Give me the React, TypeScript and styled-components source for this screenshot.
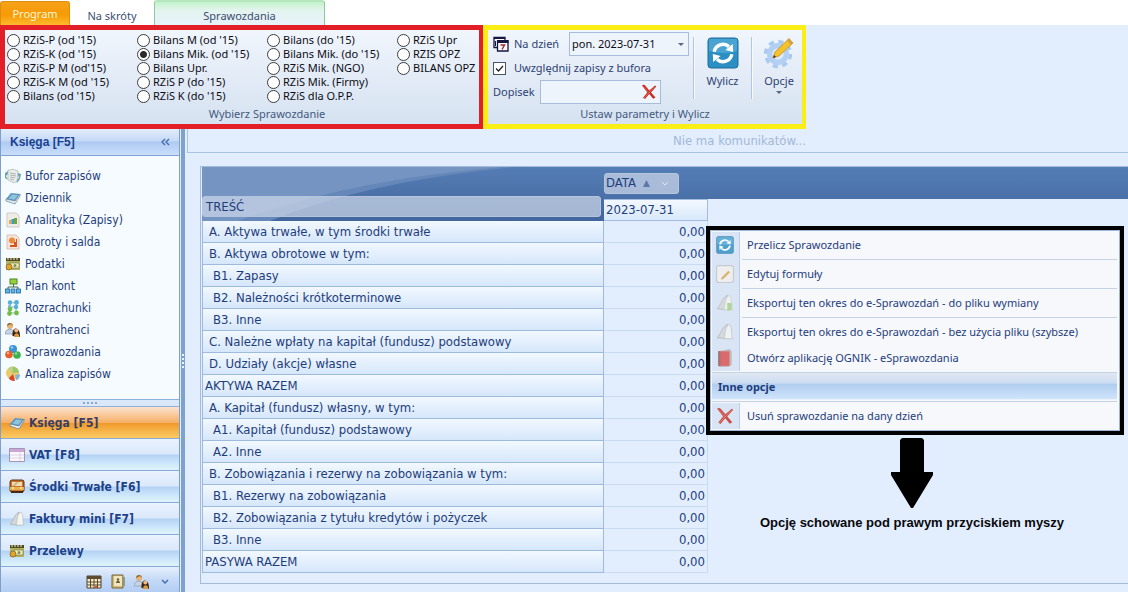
import React from "react";
import styled, { createGlobalStyle } from "styled-components";

const ribbonFont = `"Noto Sans", "Open Sans", sans-serif`;
const gridFont = `"DejaVu Sans Condensed", "DejaVu Sans", sans-serif`;
const navy = "#1e3d7b";

const GlobalStyle = createGlobalStyle`
  *, *::before, *::after { box-sizing: border-box; }
  body { margin: 0; background: #e2eefe; color: ${navy}; font: 12px/16px ${gridFont}; }
  button, input, select { font: inherit; color: inherit; margin: 0; }
  button { padding: 0; border: 0; background: none; cursor: pointer; }
  a { color: inherit; text-decoration: none; }
  svg { display: block; flex: none; }
`;

const Page = styled.div`
  min-height: 100vh;
  display: flex;
  flex-direction: column;
  overflow: hidden;
`;

/* ---------- ribbon ---------- */

const TabStrip = styled.nav`
  display: flex;
  align-items: stretch;
  height: 25px;
  background: #fff;
  font-family: ${ribbonFont};
  font-size: 11px;
`;

const Tab = styled.button<{ $kind: "program" | "plain" | "active" }>`
  color: ${(p) => (p.$kind === "program" ? "#fff6d8" : "#3b4d70")};
  width: ${(p) => (p.$kind === "program" ? 70 : p.$kind === "plain" ? 84 : 171)}px;
  padding-top: ${(p) => (p.$kind === "program" ? 1 : p.$kind === "plain" ? 6 : 4)}px;
  border-radius: 3px 3px 0 0;
  ${(p) =>
    p.$kind === "program" &&
    `margin-top: 1px; border: 1px solid #e08f0c; border-bottom: 0;
     background: linear-gradient(#f5a21a, #f79a05 55%, #fdb92c);`}
  ${(p) =>
    p.$kind === "active" &&
    `border: 1px solid #8fca9a; border-bottom: 0; border-top: 2px solid #b5e6bd;
     background: linear-gradient(#c3f2cb, #e2f4ee 35%, #e9f2fb);`}
`;

const Ribbon = styled.div`
  display: flex;
  align-items: stretch;
  font-family: ${ribbonFont};
  font-size: 11px;
`;

const Group = styled.section<{ $frame: string }>`
  display: flex;
  flex-direction: column;
  justify-content: space-between;
  height: 104px;
  padding-bottom: 1px;
  border: 5px solid ${(p) => p.$frame};
  border-right-width: 4px;
  background: linear-gradient(#f1f6fd, #e4ecf7 45%, #d6e2f1);
`;

const GroupTitle = styled.h2<{ $shift?: number }>`
  margin: 0;
  padding-left: ${(p) => p.$shift ?? 0}px;
  font-size: 11px;
  font-weight: 400;
  line-height: 18px;
  text-align: center;
  color: #43597f;
`;

const RadioGrid = styled.div`
  display: grid;
  grid-auto-flow: column;
  grid-template-rows: repeat(5, 14px);
  grid-template-columns: repeat(3, 130px) 82px;
  padding: 3px 0 0 2px;
`;

const RadioLabel = styled.label`
  display: flex;
  align-items: center;
  gap: 3px;
  line-height: 14px;
  color: #0c0c14;
  white-space: nowrap;
`;

const Radio = styled.input`
  appearance: none;
  flex: none;
  width: 13px;
  height: 13px;
  border: 1px solid #3c3c3c;
  border-radius: 50%;
  background: #fff;
  &:checked {
    background: radial-gradient(circle, #2b2b2b 3px, #fff 4px);
  }
`;

const Params = styled.div`
  display: flex;
  padding: 2px 0 0 5px;
`;

const Fields = styled.div`
  display: flex;
  flex-direction: column;
  width: 200px;
`;

const FieldRow = styled.div<{ $gap: number }>`
  display: flex;
  align-items: center;
  gap: ${(p) => p.$gap}px;
  height: 24px;
  color: #2d4272;
  white-space: nowrap;
`;

const FieldLabel = styled.label<{ $w?: number }>`
  width: ${(p) => (p.$w ? p.$w + "px" : "auto")};
`;

const DateBox = styled.div`
  display: flex;
  align-items: center;
  width: 120px;
  height: 24px;
  padding-right: 4px;
  border: 1px solid #a5bcdc;
  background: #eef4fc;
`;

const DateSelect = styled.select`
  appearance: none;
  flex: 1;
  min-width: 0;
  height: 22px;
  padding: 0 0 0 2px;
  border: 0;
  outline: 0;
  background: none;
  color: #0c0c14;
`;

const Check = styled.input`
  appearance: none;
  width: 13px;
  height: 13px;
  border: 1px solid #4b5566;
  background: #fff;
`;

const CheckWrap = styled.span`
  display: grid;
  > * { grid-area: 1 / 1; }
  svg { pointer-events: none; position: relative; }
`;

const NoteBox = styled.div`
  display: flex;
  align-items: center;
  width: 121px;
  height: 24px;
  padding-right: 3px;
  border: 1px solid #a5bcdc;
  background: #eef4fc;
`;

const NoteInput = styled.input`
  flex: 1;
  min-width: 0;
  height: 20px;
  border: 0;
  outline: 0;
  background: none;
`;

const BigButton = styled.button`
  display: flex;
  flex-direction: column;
  align-items: center;
  width: 58px;
  height: 62px;
  margin-top: 5px;
  border-left: 1px solid #b4c6df;
  box-shadow: inset 1px 0 #f6faff;
  color: #2d4272;
  span { line-height: 20px; margin-top: 2px; }
  &:last-child { width: 51px; padding-left: 4px; }
`;

/* ---------- sidebar ---------- */

const Body = styled.div`
  flex: 1;
  display: flex;
`;

const Sidebar = styled.aside`
  display: flex;
  flex-direction: column;
  flex: none;
  width: 180px;
  border: solid #7f9fcb;
  border-width: 0 1px;
  background: #f6fbff;
`;

const SideHead = styled.header`
  display: flex;
  justify-content: space-between;
  align-items: center;
  height: 27px;
  padding: 0 9px 1px;
  border-bottom: 1px solid #7fa3d3;
  background: linear-gradient(#e2edfc, #c5d9f6 45%, #aecaf2 50%, #c9defa);
  font: bold 12px/16px "Liberation Sans", Arial, sans-serif;
  color: #1a4191;
`;

const SideList = styled.ul`
  flex: 1;
  margin: 0;
  padding: 9px 0 14px;
  list-style: none;
`;

const SideLink = styled.a`
  display: flex;
  align-items: center;
  gap: 4px;
  height: 22px;
  padding-left: 4px;
`;

const Grip = styled.div`
  display: flex;
  justify-content: center;
  align-items: center;
  gap: 2px;
  height: 8px;
  border: solid #8fb0d8;
  border-width: 1px 0;
  background: #dbe8fa;
  i { width: 2px; height: 2px; background: #87a7d3; }
`;

const NavButton = styled.button<{ $active?: boolean }>`
  display: flex;
  align-items: center;
  gap: 4px;
  height: 32px;
  padding: 1px 0 0 8px;
  border-bottom: 1px solid #86a9d6;
  font-size: 12px;
  font-weight: bold;
  color: ${(p) => (p.$active ? "#3a3f63" : "#1d4289")};
  background: ${(p) =>
    p.$active
      ? "linear-gradient(#fbe3d0, #f6b067 50%, #ef9a2b 52%, #fbcb62)"
      : "linear-gradient(#eaf2fd, #dbe9fb 48%, #b4d2f5 52%, #d3ecfb 85%, #dff3fd)"};
`;

const SideFoot = styled.footer`
  display: flex;
  justify-content: flex-end;
  align-items: center;
  gap: 8px;
  height: 25px;
  padding: 5px 5px 0 0;
  background: linear-gradient(#e6effc, #c5daf7 50%, #b3cdf3);
`;

const Splitter = styled.div`
  flex: none;
  display: flex;
  flex-direction: column;
  align-items: center;
  justify-content: center;
  gap: 2px;
  width: 7px;
  border: solid #e2eefe;
  border-width: 0 2px 0 1px;
  background: #7ea1cd;
  i { width: 2px; height: 2px; background: #e8f1fd; }
`;

/* ---------- report ---------- */

const Main = styled.main`
  position: relative;
  flex: 1;
  min-width: 0;
`;

const Message = styled.p`
  margin: 0;
  height: 24px;
  padding-left: 163px;
  border: solid #a9c4e2;
  border-width: 0 0 1px 1px;
  font-size: 13px;
  line-height: 24px;
  text-align: center;
  color: #a2b8d6;
`;

const Pivot = styled.div`
  min-height: 418px;
  margin: 13px 0 8px 13px;
  padding-left: 1px;
  border: solid #a3bcdb;
  border-width: 1px 0 1px 1px;
`;

const Table = styled.table`
  width: 100%;
  table-layout: fixed;
  border-collapse: separate;
  border-spacing: 0;
  font-size: 13px;
  th, td { padding: 0; font-weight: 400; }
`;

const TitleCell = styled.th`
  position: relative;
  vertical-align: bottom;
  text-align: left;
  background: #7594c1;
  > svg { position: absolute; inset: 0; width: 100%; height: 100%; }
`;

const FieldBar = styled.button<{ $chip?: boolean }>`
  position: relative;
  display: flex;
  align-items: center;
  gap: 7px;
  width: ${(p) => (p.$chip ? "75px" : "calc(100% - 3px)")};
  height: 21px;
  margin: ${(p) => (p.$chip ? "0" : "0 0 4px")};
  padding-left: ${(p) => (p.$chip ? 1 : 3)}px;
  border: 1px solid #b4c5de;
  border-radius: 3px;
  background: rgba(206, 216, 233, 0.7);
`;

const DataCell = styled.th`
  height: 32px;
  background: linear-gradient(#557db5, #4a70a8);
`;

const DateHead = styled.th`
  height: 22px;
  border: 1px solid #a3bcdb;
  border-left: 0;
  background: linear-gradient(#f3f8ff, #d8e8fb);
  text-align: left;
  text-indent: 2px;
`;

const RowHead = styled.th<{ $level: number }>`
  height: 22px;
  border: solid #9fbbdc;
  border-width: 0 1px 1px;
  background: linear-gradient(#f2f8ff, #d6e7fb);
  text-align: left;
  text-indent: ${(p) => 2 + p.$level * 4}px;
`;

const Value = styled.td`
  border: solid #c8dbf0;
  border-width: 0 1px 1px 0;
  text-align: right;
  && { padding-right: 2px; }
`;

const ContextMenu = styled.div`
  position: absolute;
  top: 97px;
  left: 519px;
  right: 4px;
  border: 4px solid #000;
`;

const MenuList = styled.ul`
  margin: 0;
  padding: 1px 2px 1px 1px;
  border: 1px solid #9db7d8;
  list-style: none;
  background: #f6f8fb;
  font-family: ${ribbonFont};
  font-size: 11px;
`;

const MenuRow = styled.li<{ $rule?: boolean }>`
  display: grid;
  grid-template-columns: 28px 1fr;
  column-gap: 2px;
  height: ${(p) => (p.$rule ? 29 : 26)}px;
  background: linear-gradient(90deg, #d9e5f4 27px, #bccfe6 27px 28px, transparent 28px);
  > button {
    grid-column: 1 / 3;
    display: flex;
    align-items: center;
    gap: 13px;
    height: 26px;
    padding-left: 4px;
    white-space: nowrap;
  }
  svg { opacity: 0.8; }
  &::after {
    content: "";
    display: ${(p) => (p.$rule ? "block" : "none")};
    grid-column: 2;
    height: 1px;
    margin: 1px 0;
    background: #c3d2e4;
  }
`;

const MenuHead = styled.li`
  height: 30px;
  margin: 1px 0;
  padding-left: 6px;
  border: solid #c3d2e4;
  border-width: 1px 0;
  background: linear-gradient(#e0e8f3, #ccdcf0 36%, #b0cdef 40%, #cfe3fb 92%, #f6f8fb 96%);
  font-weight: bold;
  line-height: 28px;
`;

const Callout = styled.figure`
  position: absolute;
  top: 309px;
  left: 569px;
  width: 312px;
  margin: 0;
  display: flex;
  flex-direction: column;
  align-items: center;
  gap: 6px;
  font: bold 13px/18px "Liberation Sans", Arial, sans-serif;
  color: #08080c;
`;

/* ---------- icons ---------- */

type IconName =
  | "buffer" | "book" | "chartDoc" | "pieDoc" | "money" | "plan" | "nodes" | "people"
  | "balls" | "pie" | "sheet" | "bus" | "papers" | "papersGreen" | "calendar" | "address"
  | "refresh" | "gear" | "cross" | "edit" | "redBook" | "date";

const shapes: Record<IconName, React.ReactNode> = {
  buffer: (
    <>
      <path d="M0 5 3 3v3L1 8l2 4-3-2zM16 6l-3-1v2l1 3-3 2 1 3 3-4z" fill="#63a5b2" />
      <path d="M3 2h3l1-1 6 2-1 10-3 2-6-3z" fill="#eceeea" stroke="#a9b2b0" strokeWidth=".7" />
      <path d="M5 5l6 1M5 7l6 1M5 9l5 1M5 11l4 1" stroke="#98a5a4" strokeWidth=".8" />
    </>
  ),
  book: (
    <>
      <path d="m1 9 5-6 9 1-5 7z" fill="#5b94bd" />
      <path d="m3.500 8.500 3.500-4 6 .7-3.500 4.500z" fill="#8fc4df" />
      <path d="m1 9 9 2 5-7v2l-5 8-9-3z" fill="#e7edf0" stroke="#48708f" strokeWidth=".6" />
    </>
  ),
  chartDoc: (
    <>
      <path d="M2 1h9l3 3v11H2z" fill="#efece6" stroke="#c6c2ba" strokeWidth=".8" />
      <path d="M4 12V8h2.500v4z" fill="#e9a54a" />
      <path d="M6.500 12V7H9v5z" fill="#3d9dc4" />
      <path d="M9 12V6h3v6z" fill="#6ea640" />
    </>
  ),
  pieDoc: (
    <>
      <path d="M2 1h9l3 3v11H2z" fill="#f4e4d9" stroke="#d4b8a8" strokeWidth=".8" />
      <circle cx="7" cy="6.500" r="3" fill="#ee8a37" />
      <path d="M5 13v-2h4V8h2V5h1v8z" fill="#d65322" />
    </>
  ),
  money: (
    <>
      <path d="M1 3h14v11H1z" fill="#b3b264" />
      <path d="M1 2h14v3H1z" fill="#4d4a22" />
      <path d="M3 2v2M6 2v2M9 2v2M12 2v2" stroke="#f6f2c8" strokeWidth="1" />
      <path d="M5 7h9v5H5z" fill="#ecebc2" stroke="#717733" strokeWidth=".6" />
      <circle cx="4" cy="11" r="3" fill="#dca432" stroke="#88601c" strokeWidth=".7" />
      <circle cx="10" cy="9.500" r="1.500" fill="#87914c" />
    </>
  ),
  plan: (
    <>
      <path d="M8.500 6v3M3 11V9h10v2" fill="none" stroke="#3d6a52" />
      <rect x="5" y="1" width="7" height="5" fill="#97cf3d" stroke="#4c8a22" />
      <g fill="#65b4e6" stroke="#20689f" strokeWidth=".8">
        <rect x=".5" y="11" width="4" height="4" />
        <rect x="6" y="11" width="4" height="4" />
        <rect x="11.500" y="11" width="4" height="4" />
      </g>
    </>
  ),
  nodes: (
    <>
      <path d="M5 2.500 11 3M5 7h6M5 13h6M5 2v11M11 3v10" stroke="#8dbba0" />
      <g fill="#58afd9">
        <circle cx="5" cy="2.500" r="2.200" /><circle cx="11.500" cy="2.500" r="2.400" /><circle cx="11" cy="7" r="2.200" />
      </g>
      <g fill="#73bd48">
        <circle cx="5" cy="9" r="2.400" /><circle cx="4.500" cy="13.500" r="2.400" /><circle cx="11.500" cy="13" r="2.400" />
      </g>
      <circle cx="4.500" cy="6" r="1.500" fill="#74c0d8" />
    </>
  ),
  people: (
    <>
      <circle cx="5" cy="4" r="3" fill="#e6b476" />
      <path d="M2 4c0-4 6-4 6 0L6 2z" fill="#90642d" />
      <path d="M0 12c0-6 9-7 9 0z" fill="#c6d4e6" stroke="#7d8fab" strokeWidth=".6" />
      <path d="M7.500 14c-1-10 8-10 7.500 1z" fill="#3d2411" />
      <circle cx="11.300" cy="8.500" r="2" fill="#eeb98a" />
      <path d="M9 15c0-5 5-5 5.500 0z" fill="#d59a42" />
    </>
  ),
  balls: (
    <>
      <circle cx="8" cy="5" r="4" fill="#3b95d5" />
      <circle cx="4" cy="10.500" r="3.800" fill="#e6602c" />
      <circle cx="12" cy="11" r="3.800" fill="#3cb34a" />
      <g fill="#fff" opacity=".5"><circle cx="7" cy="3.500" r="1.300" /><circle cx="3" cy="9" r="1.200" /><circle cx="11" cy="9.500" r="1.200" /></g>
    </>
  ),
  pie: (
    <>
      <circle cx="7.500" cy="7" r="6.500" fill="#ecc96a" />
      <path d="M7.500 7V.5a6.500 6.500 0 0 1 6.500 6z" fill="#9cc66c" />
      <path d="M7.500 7 3 2.500A6.500 6.500 0 0 1 7.500.5z" fill="#b7d58e" />
      <path d="m10 9 5-1c0 4-2 6-4 6z" fill="#88b3d8" />
      <path d="m8 8 2 7c-3 0-6-1-6-3z" fill="#d5452b" />
    </>
  ),
  sheet: (
    <>
      <path d="M.5 1.500h15v13H.5z" fill="#fbf9fd" stroke="#a793b5" />
      <path d="M1 2h14v3H1z" fill="#caa6d4" />
      <path d="M1 8h14M1 11h14M11 5v9" stroke="#d3c9dc" strokeWidth=".8" />
    </>
  ),
  bus: (
    <>
      <rect x="1" y="1" width="14" height="12" rx="2" fill="#c8742e" stroke="#5d3011" />
      <path d="M3 3h10v4H3z" fill="#f0dfb4" />
      <path d="m3 7 4-4h3L6 7z" fill="#cdb98a" />
      <path d="M1 8h14v3H1z" fill="#e8b04b" />
      <path d="M2 12h12v2H2z" fill="#452a19" />
      <path d="M3 9h2M11 9h2" stroke="#fff4c4" strokeWidth="1.500" />
    </>
  ),
  papers: (
    <>
      <path d="M1 13C5 9 5 4 10 1L9 14z" fill="#d3d7d6" stroke="#9fa5a5" strokeWidth=".6" />
      <path d="M7 14C9 9 7 4 12 1c3 4 1 8 3 13z" fill="#f4f5f3" stroke="#b2b6b5" strokeWidth=".6" />
    </>
  ),
  papersGreen: (
    <>
      <path d="M1 13C5 9 5 4 10 1L9 14z" fill="#d3d7d6" stroke="#a5abab" strokeWidth=".6" />
      <path d="M7 14C9 9 7 4 12 1c3 4 1 8 3 13z" fill="#f1f3ef" stroke="#c2c6c5" strokeWidth=".6" />
      <path d="M10 8h4v6l-4 1z" fill="#a9d084" />
    </>
  ),
  calendar: (
    <>
      <path d="M1 2h14v12H1z" fill="#f7eec9" stroke="#4c3f2c" />
      <path d="M1 2h14v3H1z" fill="#5c4a31" />
      <path d="M1 8h14M1 11h14M4.500 5v9M8 5v9M11.500 5v9" stroke="#5c4a31" />
      <path d="M9 12h2v2H9z" fill="#d9522b" />
    </>
  ),
  address: (
    <>
      <path d="M2 1h11v13H2z" fill="#cfb877" stroke="#776437" />
      <path d="M4 2h8v10H4z" fill="#efe6bf" />
      <path d="M13 3h2v9h-2z" fill="#8c9b83" />
      <circle cx="8" cy="5.500" r="1.200" fill="#6a5a33" />
      <path d="M6 9c0-3 4-3 4 0z" fill="#6a5a33" />
    </>
  ),
  refresh: (
    <>
      <rect x=".5" y=".5" width="15" height="15" rx="1.500" fill="#2b8fc4" stroke="#1d6c9c" strokeWidth=".5" />
      <path d="M1 1h14v6Q8 9 1 7z" fill="#5db2dc" opacity=".6" />
      <path d="M3.600 7.400A4.500 4.500 0 0 1 11 4.800M12.400 8.600A4.500 4.500 0 0 1 5 11.200" fill="none" stroke="#fff" strokeWidth="1.700" />
      <path d="m12.900 3.500.2 4-3.900-1zM3.100 12.500l-.2-4 3.900 1z" fill="#fff" />
    </>
  ),
  gear: (
    <>
      <circle cx="7.500" cy="8.500" r="6.200" fill="none" stroke="#a9cbf2" strokeWidth="1.800" strokeDasharray="2.600 2.270" />
      <circle cx="7.500" cy="8.500" r="4.200" fill="#dceafb" stroke="#b2d0f4" strokeWidth="2.600" />
      <path d="m5 10.500 1-3L13 .800 15 3l-7 6.500z" fill="#f4c22d" stroke="#c98e17" strokeWidth=".4" />
      <path d="M13 .800 15 3l-1 1-2-2.200z" fill="#d3a14a" />
      <path d="m5 10.500.5-1.500 1 1z" fill="#3b3324" />
    </>
  ),
  cross: (
    <>
      <path d="M1 1.500Q3 0 4.500 2l3.800 4.500L14 1.500l1.300 1L10 8.500l4.500 5-2.300 1.300-4-4.800L4 15l-2-1.200 4.300-5.300z" fill="#c62a1e" />
      <path d="M2 2.200 8 8.500M13.500 3 3 14" stroke="#e77464" strokeWidth=".8" />
    </>
  ),
  edit: (
    <>
      <rect x=".5" y=".5" width="15" height="15" rx="2" fill="#f3f1ec" stroke="#bfc4c8" />
      <path d="m5 11 6-6 1.500 1.500-6 6-2 .5z" fill="#dca850" />
    </>
  ),
  redBook: (
    <>
      <path d="m2 2 10-2 2 2v12l-3 2H3l-1-1z" fill="#b9b3b4" />
      <path d="M2 2h10v13H2z" fill="#dd4c4c" />
      <path d="M2 2h2v13H2z" fill="#8d5a60" />
    </>
  ),
  date: (
    <>
      <path d="M1 1.500h11v10H1z" fill="#fff" stroke="#15153f" strokeWidth="1.300" />
      <path d="M1 1h11v2H1z" fill="#15153f" />
      <path d="M4.500 5h10.500v10H4.500z" fill="#fff" stroke="#15153f" strokeWidth="1.300" />
      <path d="M4 4h11.500v3H4z" fill="#15153f" />
      <path d="M7.500 9h4l-2.500 4.500" fill="none" stroke="#a32639" strokeWidth="1.500" />
      <path d="M2.500 5v5" stroke="#15153f" />
    </>
  ),
};

const Icon = ({ name, size = 16 }: { name: IconName; size?: number }) => (
  <svg width={size} height={size} viewBox="0 0 16 16" aria-hidden="true">
    {shapes[name]}
  </svg>
);

const Caret = () => (
  <svg width="6" height="3" viewBox="0 0 6 3" aria-hidden="true">
    <path d="M0 0h6L3 3z" fill="#5a6780" />
  </svg>
);

/* ---------- data ---------- */

const reports = [
  "RZiS-P (od '15)", "RZiS-K (od '15)", "RZiS-P M (od'15)", "RZiS-K M (od '15)", "Bilans (od '15)",
  "Bilans M (od '15)", "Bilans Mik. (od '15)", "Bilans Upr.", "RZiS P (do '15)", "RZiS K (do '15)",
  "Bilans (do '15)", "Bilans Mik. (do '15)", "RZiS Mik. (NGO)", "RZiS Mik. (Firmy)", "RZiS dla O.P.P.",
  "RZiS Upr", "RZIS OPZ", "BILANS OPZ",
];

const links: [IconName, string][] = [
  ["buffer", "Bufor zapisów"], ["book", "Dziennik"], ["chartDoc", "Analityka (Zapisy)"],
  ["pieDoc", "Obroty i salda"], ["money", "Podatki"], ["plan", "Plan kont"],
  ["nodes", "Rozrachunki"], ["people", "Kontrahenci"], ["balls", "Sprawozdania"],
  ["pie", "Analiza zapisów"],
];

const modules: [IconName, string][] = [
  ["book", "Księga [F5]"], ["sheet", "VAT [F8]"], ["bus", "Środki Trwałe [F6]"],
  ["papers", "Faktury mini [F7]"], ["money", "Przelewy"],
];

const rows: [number, string][] = [
  [1, "A. Aktywa trwałe, w tym środki trwałe"],
  [1, "B. Aktywa obrotowe w tym:"],
  [2, "B1. Zapasy"],
  [2, "B2. Należności krótkoterminowe"],
  [2, "B3. Inne"],
  [1, "C. Należne wpłaty na kapitał (fundusz) podstawowy"],
  [1, "D. Udziały (akcje) własne"],
  [0, "AKTYWA RAZEM"],
  [1, "A. Kapitał (fundusz) własny, w tym:"],
  [2, "A1. Kapitał (fundusz) podstawowy"],
  [2, "A2. Inne"],
  [1, "B. Zobowiązania i rezerwy na zobowiązania w tym:"],
  [2, "B1. Rezerwy na zobowiązania"],
  [2, "B2. Zobowiązania z tytułu kredytów i pożyczek"],
  [2, "B3. Inne"],
  [0, "PASYWA RAZEM"],
];

const menu: [IconName, string, boolean][] = [
  ["refresh", "Przelicz Sprawozdanie", true],
  ["edit", "Edytuj formuły", true],
  ["papersGreen", "Eksportuj ten okres do e-Sprawozdań - do pliku wymiany", true],
  ["papers", "Eksportuj ten okres do e-Sprawozdań - bez użycia pliku (szybsze)", false],
  ["redBook", "Otwórz aplikację OGNIK - eSprawozdania", false],
];

export default function App() {
  return (
    <Page>
      <GlobalStyle />
      <TabStrip>
        <Tab $kind="program">Program</Tab>
        <Tab $kind="plain">Na skróty</Tab>
        <Tab $kind="active">Sprawozdania</Tab>
      </TabStrip>

      <Ribbon>
        <Group $frame="#e21f26">
          <RadioGrid>
            {reports.map((name) => (
              <RadioLabel key={name}>
                <Radio type="radio" name="report" defaultChecked={name === "Bilans Mik. (od '15)"} />
                {name}
              </RadioLabel>
            ))}
          </RadioGrid>
          <GroupTitle $shift={50}>Wybierz Sprawozdanie</GroupTitle>
        </Group>

        <Group $frame="#fbee14">
          <Params>
            <Fields>
              <FieldRow $gap={5}>
                <Icon name="date" />
                <FieldLabel htmlFor="day" $w={50}>Na dzień</FieldLabel>
                <DateBox>
                  <DateSelect id="day">
                    <option>pon. 2023-07-31</option>
                  </DateSelect>
                  <Caret />
                </DateBox>
              </FieldRow>
              <FieldRow $gap={8}>
                <CheckWrap>
                  <Check type="checkbox" id="buffer" defaultChecked />
                  <svg width="13" height="13" viewBox="0 0 13 13" aria-hidden="true">
                    <path d="m3 6.500 2.500 2.500L10 4" fill="none" stroke="#222" strokeWidth="1.300" />
                  </svg>
                </CheckWrap>
                <FieldLabel htmlFor="buffer">Uwzględnij zapisy z bufora</FieldLabel>
              </FieldRow>
              <FieldRow $gap={0}>
                <FieldLabel htmlFor="note" $w={47}>Dopisek</FieldLabel>
                <NoteBox>
                  <NoteInput id="note" />
                  <button aria-label="Wyczyść"><Icon name="cross" /></button>
                </NoteBox>
              </FieldRow>
            </Fields>
            <BigButton>
              <Icon name="refresh" size={32} />
              <span>Wylicz</span>
            </BigButton>
            <BigButton>
              <Icon name="gear" size={32} />
              <span>Opcje</span>
              <Caret />
            </BigButton>
          </Params>
          <GroupTitle>Ustaw parametry i Wylicz</GroupTitle>
        </Group>
      </Ribbon>

      <Body>
        <Sidebar>
          <SideHead>
            Księga [F5]
            <svg width="9" height="8" viewBox="0 0 9 8" aria-hidden="true">
              <path d="M4 1 1 4l3 3M8 1 5 4l3 3" fill="none" stroke="#3f68ad" strokeWidth="1.300" />
            </svg>
          </SideHead>
          <SideList>
            {links.map(([icon, text]) => (
              <li key={text}>
                <SideLink href="#"><Icon name={icon} />{text}</SideLink>
              </li>
            ))}
          </SideList>
          <Grip><i /><i /><i /><i /></Grip>
          {modules.map(([icon, text], i) => (
            <NavButton key={text} $active={i === 0}><Icon name={icon} />{text}</NavButton>
          ))}
          <SideFoot>
            <Icon name="calendar" />
            <Icon name="address" />
            <Icon name="people" />
            <svg width="16" height="8" viewBox="0 0 16 8" aria-hidden="true">
              <path d="m4 2 3 3 3-3" fill="none" stroke="#3f68ad" strokeWidth="1.300" />
            </svg>
          </SideFoot>
        </Sidebar>
        <Splitter><i /><i /><i /><i /></Splitter>

        <Main>
          <Message>Nie ma komunikatów...</Message>
          <Pivot>
            <Table>
              <colgroup>
                <col width="402" />
                <col width="104" />
                <col />
              </colgroup>
              <thead>
                <tr>
                  <TitleCell rowSpan={2} scope="col">
                    <svg viewBox="0 0 402 54" preserveAspectRatio="none" aria-hidden="true">
                      <defs>
                        <linearGradient id="head" x1="0" y1="0" x2="0" y2="1">
                          <stop offset="0" stopColor="#557db5" />
                          <stop offset="1" stopColor="#42669c" />
                        </linearGradient>
                      </defs>
                      <path d="M36 54Q145 13 300 0H402V54z" fill="#6587b9" />
                      <path d="M68 54Q165 14 312 0H402V54z" fill="url(#head)" />
                    </svg>
                    <FieldBar>TREŚĆ</FieldBar>
                  </TitleCell>
                  <DataCell colSpan={2} scope="col">
                    <FieldBar $chip>
                      DATA
                      <svg width="27" height="9" viewBox="0 0 27 9" aria-hidden="true">
                        <path d="m0 8 3.500-7L7 8z" fill="#5b78a8" />
                        <path d="m19 3 3 3 3-3" fill="none" stroke="#dbe5f3" />
                      </svg>
                    </FieldBar>
                  </DataCell>
                </tr>
                <tr>
                  <DateHead scope="col">2023-07-31</DateHead>
                  <td />
                </tr>
              </thead>
              <tbody>
                {rows.map(([level, text], i) => (
                  <tr key={i}>
                    <RowHead scope="row" $level={level}>{text}</RowHead>
                    <Value>0,00</Value>
                    <td />
                  </tr>
                ))}
              </tbody>
            </Table>
          </Pivot>

          <ContextMenu>
            <MenuList>
              {menu.map(([icon, text, rule]) => (
                <MenuRow key={text} $rule={rule}>
                  <button><Icon name={icon} size={18} />{text}</button>
                </MenuRow>
              ))}
              <MenuHead>Inne opcje</MenuHead>
              <MenuRow>
                <button><Icon name="cross" size={18} />Usuń sprawozdanie na dany dzień</button>
              </MenuRow>
            </MenuList>
          </ContextMenu>

          <Callout>
            <svg width="42" height="70" viewBox="0 0 42 70" aria-hidden="true">
              <path d="M11 0h20l2 2v32h9v3L22 70h-2L0 37v-3h9V2z" fill="#000" />
            </svg>
            <figcaption>Opcję schowane pod prawym przyciskiem myszy</figcaption>
          </Callout>
        </Main>
      </Body>
    </Page>
  );
}
